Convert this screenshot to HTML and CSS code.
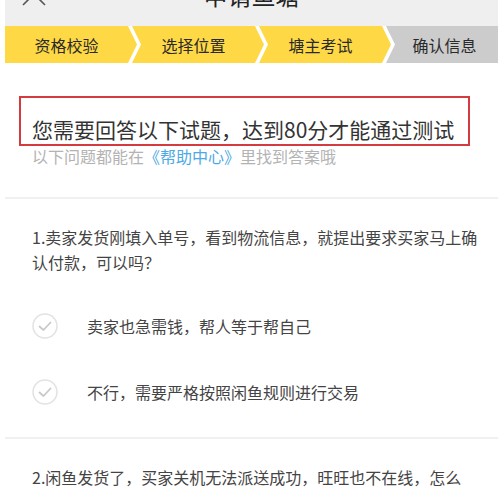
FILE: index.html
```html
<!DOCTYPE html>
<html lang="zh-CN">
<head>
    <meta charset="UTF-8" />
    <meta name="viewport" content="width=device-width, initial-scale=1.0"/>
    <title>申请鱼塘</title>
    <link rel="stylesheet" href="styles.css">
</head>
<body>
    <div class="app">

        <!-- Top bar -->
        <div class="topbar">
            <svg class="close" width="24" height="24" viewBox="0 0 24 24">
                <path d="M1 1 L23 23 M23 1 L1 23" stroke="#555" stroke-width="1.6" fill="none"/>
            </svg>
            <div class="title">申请鱼塘</div>
            <div class="spacer"></div>
        </div>

        <!-- Steps -->
        <div class="steps">
            <div class="step first">资格校验</div>
            <div class="step">选择位置</div>
            <div class="step">塘主考试</div>
            <div class="step last">确认信息</div>
        </div>

        <!-- Intro -->
        <div class="intro">
            <div class="mark-box">
                <div class="intro-title">您需要回答以下试题，达到80分才能通过测试</div>
            </div>
            <div class="intro-sub">以下问题都能在<span class="link">《帮助中心》</span>里找到答案哦</div>
        </div>

        <!-- Question 1 -->
        <div class="question">
            <div class="q-text">1.卖家发货刚填入单号，看到物流信息，就提出要求买家马上确认付款，可以吗？</div>
            <div class="options">
                <div class="option">
                    <span class="check">
                        <svg width="26" height="26" viewBox="0 0 26 26">
                            <circle cx="13" cy="13" r="12" stroke="#e2e2e2" stroke-width="1.5" fill="none"/>
                            <path d="M7.5 13.5 L11.5 17 L18.5 9.5" stroke="#c9c9c9" stroke-width="1.8" fill="none" stroke-linecap="round" stroke-linejoin="round"/>
                        </svg>
                    </span>
                    <span>卖家也急需钱，帮人等于帮自己</span>
                </div>
                <div class="option">
                    <span class="check">
                        <svg width="26" height="26" viewBox="0 0 26 26">
                            <circle cx="13" cy="13" r="12" stroke="#e2e2e2" stroke-width="1.5" fill="none"/>
                            <path d="M7.5 13.5 L11.5 17 L18.5 9.5" stroke="#c9c9c9" stroke-width="1.8" fill="none" stroke-linecap="round" stroke-linejoin="round"/>
                        </svg>
                    </span>
                    <span>不行，需要严格按照闲鱼规则进行交易</span>
                </div>
            </div>
        </div>

        <!-- Question 2 -->
        <div class="question">
            <div class="q-text">2.闲鱼发货了，买家关机无法派送成功，旺旺也不在线，怎么<br>办？</div>
        </div>

    </div>
</body>
</html>
```

FILE: styles.css
```css
body {
    margin: 0;
    padding: 0;
    background: #fff;
    font-family: "Noto Sans CJK TC", "Noto Sans CJK SC", sans-serif;
    overflow: hidden;
}

.app {
    margin-left: 5px;
}

.topbar {
    height: 26px;
    background: #efefef;
    display: flex;
    overflow: hidden;
}

.close {
    flex: none;
    margin-left: 17px;
    margin-top: -18px;
}

.title {
    flex: 1;
    text-align: center;
    font-size: 24px;
    line-height: 24px;
    margin-top: -17px;
    color: #222;
}

.spacer {
    width: 41px;
    flex: none;
}

.steps {
    display: flex;
    height: 37px;
}

.step {
    flex: none;
    width: 132px;
    margin-left: -5px;
    padding-right: 9px;
    box-sizing: border-box;
    background: #fed945;
    color: #2a2a2a;
    font-size: 16px;
    display: flex;
    justify-content: center;
    align-items: center;
    clip-path: polygon(0 0, calc(100% - 9px) 0, 100% 50%, calc(100% - 9px) 100%, 0 100%, 9px 50%);
}

.step.first {
    margin-left: 0;
    clip-path: polygon(0 0, calc(100% - 9px) 0, 100% 50%, calc(100% - 9px) 100%, 0 100%);
}

.step.last {
    flex: 1;
    padding-right: 0;
    padding-left: 5px;
    background: #cccccc;
    clip-path: polygon(0 0, 100% 0, 100% 100%, 0 100%, 9px 50%);
}

.intro {
    padding: 33px 18px 31px 14px;
    border-bottom: 2px solid #f0f0f0;
}

.mark-box {
    width: 451px;
    box-sizing: border-box;
    border: 2px solid #d33b3f;
    padding: 17px 10px 1px 11px;
}

.intro-title {
    font-size: 21px;
    line-height: 28px;
    color: #333;
    white-space: nowrap;
}

.intro-sub {
    padding-left: 13px;
    font-size: 16px;
    line-height: 20px;
    color: #b3b3b3;
}

.link {
    color: #4eaae6;
}

.question {
    padding: 26px 18px 12px 27px;
    border-bottom: 2px solid #f0f0f0;
}

.q-text {
    font-size: 16px;
    line-height: 25px;
    color: #444;
}

.options {
    margin-top: 18px;
}

.option {
    height: 66px;
    display: flex;
    align-items: center;
    gap: 29px;
    font-size: 16px;
    color: #444;
}

.check {
    display: flex;
    width: 26px;
    height: 26px;
}
```
